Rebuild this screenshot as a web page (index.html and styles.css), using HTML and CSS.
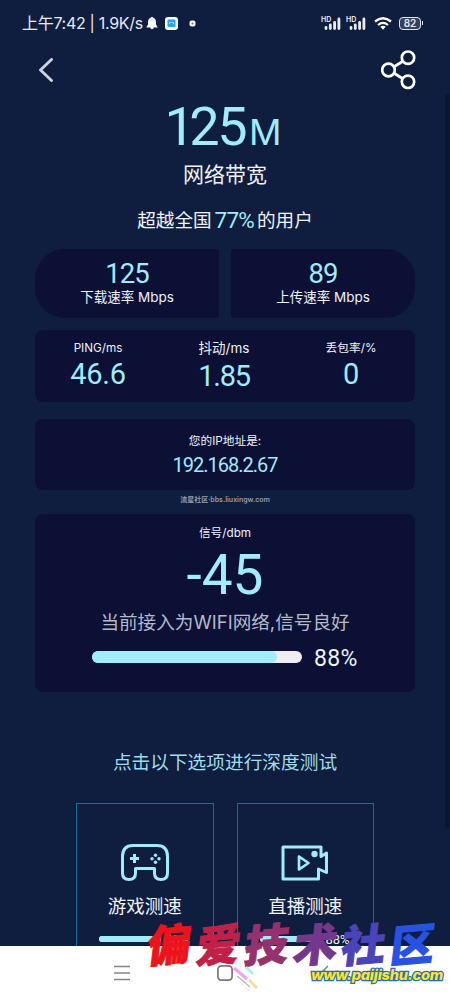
FILE: index.html
```html
<!DOCTYPE html>
<html lang="zh-CN">
<head>
<meta charset="utf-8">
<title>网络测速</title>
<link rel="stylesheet" href="styles.css">
</head>
<body>
<div class="phone">
  <main class="screen">
    <div class="status">
      <span class="clock">上午7:42 | 1.9K/s</span>
      <svg class="bell" width="12" height="14" viewBox="0 0 12 14"><path d="M5 1.500Q6 0 7 1.500Q10 2.500 10 6V8.500L11.800 11.500H.2L2 8.500V6Q2 2.500 5 1.500ZM4 11H8Q7.500 13.300 6 13.300T4 11Z" fill="#f2f5fb"/></svg>
      <svg class="app" width="13" height="13" viewBox="0 0 13 13"><rect width="13" height="13" rx="3" fill="#f5faff"/><rect x="2.500" y="2.500" width="8" height="7.500" rx="1" fill="#25a5e9"/><path d="M4.500 7V5.500h4V7" fill="none" stroke="#8fdcff"/></svg>
      <svg class="dot" width="7" height="7" viewBox="0 0 7 7"><rect x=".5" y=".5" width="6" height="6" rx="2" fill="#f0f3fa"/><circle cx="3.500" cy="3.500" r="1" fill="#6b7690"/></svg>
      <div class="radios">
        <div class="signal"><span class="hd">HD</span><svg width="19" height="15" viewBox="0 0 19 15"><path d="M4 11.500v1M8.300 9v3.500M12.600 6.500V12.500M16.900 3v9.500" stroke="#e9edf6" stroke-width="2.800" stroke-linecap="round"/></svg></div>
        <div class="signal"><span class="hd">HD</span><svg width="19" height="15" viewBox="0 0 19 15"><path d="M4 11.500v1M8.300 9v3.500M12.600 6.500V12.500M16.900 3v9.500" stroke="#e9edf6" stroke-width="2.800" stroke-linecap="round"/></svg></div>
        <svg class="wifi" width="18" height="13" viewBox="0 0 18 13"><path d="M1 4.500Q9-2 17 4.500M4 8Q9 3.700 14 8" fill="none" stroke="#fff" stroke-width="2.300"/><path d="M6.300 9.800Q9 7.800 11.700 9.800L9 12.700Z" fill="#fff"/></svg>
        <div class="battery"><span class="charge">82</span></div>
      </div>
    </div>
    <div class="topbar">
      <svg width="16" height="24" viewBox="0 0 16 24"><path d="M13.500 1.500L2.500 12L13.500 22.500" fill="none" stroke="#ced3dd" stroke-width="2.900" stroke-linecap="round" stroke-linejoin="round"/></svg>
      <svg width="36" height="40" viewBox="0 0 36 40"><g fill="none" stroke="#fff" stroke-width="2.700"><path d="M13.500 16.500L21.500 11.500M13.500 23.500L21.500 28.500"/><circle cx="7.500" cy="20" r="6.300"/><circle cx="27" cy="7.700" r="6.200"/><circle cx="27" cy="31.800" r="6.200"/></g></svg>
    </div>

    <section class="hero">
      <div class="bandwidth"><span class="amount"><span class="lead">1</span>25</span><span class="unit">M</span></div>
      <h1 class="hero-label">网络带宽</h1>
      <p class="rank">超越全国<span class="percent">77%</span>的用户</p>
    </section>

    <section class="speeds">
      <div class="speed down"><strong class="speed-value">125</strong><span class="speed-label">下载速率 Mbps</span></div>
      <div class="speed up"><strong class="speed-value">89</strong><span class="speed-label">上传速率 Mbps</span></div>
    </section>

    <section class="card metrics">
      <div class="metric"><span class="metric-label">PING/ms</span><strong class="metric-value">46.6</strong></div>
      <div class="metric middle"><span class="metric-label">抖动/ms</span><strong class="metric-value">1.85</strong></div>
      <div class="metric"><span class="metric-label">丢包率/%</span><strong class="metric-value">0</strong></div>
    </section>

    <section class="card address">
      <span class="ip-label">您的IP地址是:</span>
      <strong class="ip">192.168.2.67</strong>
    </section>
    <p class="credit">流星社区·bbs.liuxingw.com</p>

    <section class="card strength">
      <span class="dbm-label">信号/dbm</span>
      <strong class="dbm">-45</strong>
      <p class="summary">当前接入为WIFI网络,信号良好</p>
      <div class="meter"><div class="track"><div class="fill" style="width:88%"></div></div><span class="meter-value">88%</span></div>
    </section>

    <h2 class="deep">点击以下选项进行深度测试</h2>
    <section class="tests">
      <div class="test">
        <svg class="test-icon" width="50" height="38" viewBox="0 0 50 38"><g fill="none" stroke="#a1ebfb" stroke-width="3"><path d="M13 2.500H37Q47.500 2.500 47.500 13.500V30Q47.500 36.500 41 36.500T34.500 30V25.500H15.500V30Q15.500 36.500 9 36.500T2.500 30V13.500Q2.500 2.500 13 2.500Z" stroke-linejoin="round"/><path d="M14.500 11v9M10 15.500h9"/></g><g fill="#a1ebfb"><circle cx="35.500" cy="12.200" r="1.700"/><circle cx="35.500" cy="19.200" r="1.700"/><circle cx="32" cy="15.700" r="1.700"/><circle cx="39" cy="15.700" r="1.700"/></g></svg>
        <span class="test-name">游戏测速</span>
        <div class="test-meter"><div class="track small"><div class="fill" style="width:88%"></div></div><span class="small-value">88%</span></div>
      </div>
      <div class="test">
        <svg class="test-icon" width="50" height="38" viewBox="0 0 50 38"><g fill="none" stroke="#a1ebfb" stroke-width="3"><path d="M3 4H41V13.500L46.500 10V29.500L38.500 26V36H3Z" stroke-linejoin="round"/><path d="M19 13.500V26.500L28.500 20Z" stroke-width="2.700" stroke-linejoin="round"/></g><circle cx="34.500" cy="11" r="3.200" fill="#a1ebfb"/></svg>
        <span class="test-name">直播测速</span>
        <div class="test-meter"><div class="track small"><div class="fill" style="width:88%"></div></div><span class="small-value">88%</span></div>
      </div>
    </section>
    <div class="scrollbar"></div>
  </main>

  <nav class="navbar">
    <svg width="16" height="16" viewBox="0 0 16 16"><path d="M0 1.500H16M0 8H16M0 14.500H16" stroke="#858585" stroke-width="1.500"/></svg>
    <svg width="16" height="16" viewBox="0 0 16 16"><rect x=".9" y=".9" width="14.200" height="14.200" rx="3.500" fill="none" stroke="#777" stroke-width="1.700"/></svg>
    <svg width="10" height="16" viewBox="0 0 10 16"><path d="M9 1L2 8L9 15" fill="none" stroke="#858585" stroke-width="1.500"/></svg>
  </nav>

  <div class="brand">
    <div class="brush"><span class="g1">偏</span><span class="g2">爱</span><span class="g3">技</span><span class="g4">术</span><span class="g5">社</span><span class="g6">区</span></div>
    <svg class="streaks" width="30" height="28" viewBox="0 0 30 28"><g fill="none"><path d="M2 3L15 14" stroke="#f2a6e8" stroke-width="3"/><path d="M14 2L21 9" stroke="#a5f2e2" stroke-width="3"/><path d="M17 15L25 23" stroke="#f8dc9b" stroke-width="3"/><path d="M5 11L18 22" stroke="#a9b3ef" stroke-width="1.300"/><path d="M7 16L17 26" stroke="#f6e3c0"/></g></svg>
    <div class="site">www.paijishu.com</div>
  </div>
</div>
</body>
</html>
```
FILE: styles.css
```css
* { box-sizing: border-box; }
body { margin: 0; background: #fff; }
h1, h2, p { margin: 0; font-weight: 400; }
strong { font-weight: 400; }
.phone {
  position: relative; width: 450px; height: 1000px; overflow: hidden;
  background: #fff; color: #f0f2f8;
  font-family: Inter, "Noto Sans CJK SC", sans-serif;
  white-space: nowrap;
}
.amount, .percent, .speed-value, .metric-value, .ip, .dbm, .meter-value, .small-value { font-family: Roboto, sans-serif; }
.screen { position: relative; height: 946px; overflow: hidden; background: #0f1d3e; }
.status { display: flex; align-items: center; height: 46px; padding: 0 29px 0 22px; }
.clock { font-size: 16px; letter-spacing: -.3px; line-height: 20px; color: #e6eaf3; }
.bell { margin-left: 3px; }
.app { margin-left: 7px; }
.dot { margin-left: 11px; }
.radios { display: flex; align-items: center; margin-left: auto; }
.signal { position: relative; width: 19px; height: 15px; margin-right: 6px; }
.signal svg { display: block; }
.hd { position: absolute; left: -1px; top: 0; font-size: 7px; line-height: 7px; font-weight: 600; }
.wifi { margin: 0 7px 0 2px; }
.battery { display: flex; align-items: center; justify-content: center; position: relative; width: 22px; height: 13px; border: 1.500px solid #e2e6ef; border-radius: 4px; background: #35405b; }
.battery::after { content: ""; position: absolute; right: -3px; top: 3px; width: 1.500px; height: 4px; background: #e2e6ef; }
.charge { font-size: 10px; line-height: 10px; font-weight: 600; color: #e6eaf3; }
.topbar { display: flex; align-items: center; justify-content: space-between; height: 48px; padding: 0 33px 0 38px; }
.hero { display: flex; flex-direction: column; align-items: center; height: 155px; }
.bandwidth { display: flex; align-items: baseline; height: 64px; line-height: 64px; color: #a1ebfb; padding: 1px 0 0; margin-left: -4px; }
.amount { font-size: 54px; letter-spacing: -2.500px; }
.lead { letter-spacing: -5.500px; }
.unit { font-size: 36px; line-height: 36px; margin-left: 4px; }
.hero-label { font-size: 21px; line-height: 30px; margin-top: 2px; }
.rank { display: flex; align-items: center; font-size: 18.600px; line-height: 28px; margin-top: 16px; }
.percent { color: #a1ebfb; font-size: 22.500px; letter-spacing: -.8px; margin: 0 3px 0 3px; }
.speeds { display: flex; gap: 12px; height: 69px; padding: 0 35px; }
.speed { display: flex; flex: 1; flex-direction: column; align-items: center; background: #0c1035; padding-top: 10px; }
.down { border-radius: 30px 2px 2px 30px; }
.up { border-radius: 2px 30px 30px 2px; }
.speed-value { font-size: 27.500px; line-height: 29px; letter-spacing: -1px; color: #a1ebfb; }
.speed-label { font-size: 13.500px; line-height: 18px; }
.card { margin: 0 35px; border-radius: 8px; background: #0c1035; }
.metrics { display: grid; grid-template-columns: 126px 126px 128px; height: 72px; margin-top: 12px; }
.metric { display: flex; flex-direction: column; align-items: center; padding-top: 10px; }
.metric-label { font-size: 11.700px; line-height: 17px; }
.metric-value { font-size: 29px; line-height: 35px; letter-spacing: -.3px; color: #a1ebfb; }
.middle .metric-label { font-size: 13.500px; }
.middle .metric-value { padding-top: 2px; letter-spacing: -1.300px; }
.address { display: flex; flex-direction: column; align-items: center; height: 71px; margin-top: 17px; padding-top: 14px; }
.ip-label { font-size: 11.700px; line-height: 17px; }
.ip { font-size: 20px; line-height: 30px; letter-spacing: -1px; color: #a1ebfb; }
.credit { height: 24px; line-height: 20px; text-align: center; font-size: 7px; font-weight: 600; color: #989ba5; }
.strength { display: flex; flex-direction: column; align-items: center; height: 178px; padding-top: 9px; }
.dbm-label { font-size: 11.700px; line-height: 20px; }
.dbm { font-size: 55px; line-height: 65px; letter-spacing: 0; color: #a1ebfb; }
.summary { font-size: 18.600px; line-height: 26px; color: #b5bac8; margin-top: 1px; }
.meter { display: flex; align-items: center; align-self: stretch; height: 30px; margin: 7px 0 0 57px; }
.track { width: 210px; height: 12px; border-radius: 6px; background: #efedef; overflow: hidden; }
.fill { height: 100%; border-radius: inherit; background: #a1ebfb; }
.meter-value { margin-left: 12px; font-size: 23px; letter-spacing: .3px; padding-top: 2px; }
.deep { margin-top: 57px; text-align: center; color: #a1dcec; font-size: 18.700px; line-height: 28px; }
.tests { display: flex; gap: 23px; margin-top: 26px; padding: 0 76px; }
.test { display: flex; flex-direction: column; align-items: center; width: 137.500px; height: 170px; border: 1px solid #14708e; padding-top: 39px; }
.test-icon { flex: none; }
.test-name { font-size: 18.500px; line-height: 28px; margin-top: 11px; }
.test-meter { display: flex; align-items: center; height: 20px; align-self: stretch; margin: 9px 0 0 22px; }
.small { width: 62px; height: 6px; }
.small-value { margin-left: 4px; font-size: 13px; }
.scrollbar { position: absolute; right: 0; top: 94px; width: 5px; height: 735px; background: #0b1731; border-radius: 3px 0 0 3px; }
.navbar { display: flex; align-items: center; justify-content: space-between; height: 54px; padding: 0 121px 0 114px; background: #fff; }
.brand { position: absolute; left: 148px; top: 910px; width: 292px; height: 84px; }
.brush { display: flex; justify-content: space-between; width: 287px; font-family: "Noto Sans CJK SC", sans-serif; font-size: 44px; line-height: 64px; font-weight: 900; -webkit-text-stroke: 1px currentColor; }
.brush span { transform: skew(-7deg, -5deg); }
.g1 { color: #eb141b; }
.g2 { color: #c02149; }
.g3 { color: #96316e; }
.g4 { color: #73388c; }
.g5 { color: #4b43b8; }
.g6 { color: #2853e1; }
.streaks { position: absolute; left: 84px; top: 55px; }
.site { position: absolute; left: 162px; top: 56px; width: 134px; text-align: center; font-family: Inter, sans-serif; font-size: 14.500px; line-height: 18px; font-style: italic; font-weight: 800; letter-spacing: -.2px; color: #ffe32c; paint-order: stroke fill; -webkit-text-stroke: 2.500px #266dbb; }
```
